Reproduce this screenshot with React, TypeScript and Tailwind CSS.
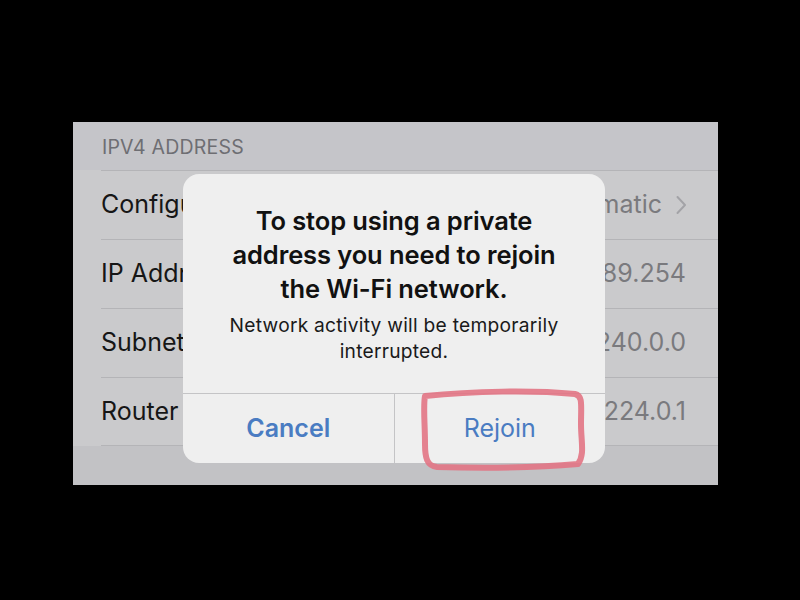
import React from 'react';

const ROWS = [
  { label: 'Configure IP', value: 'Automatic', chevron: true },
  { label: 'IP Address', value: '169.254.189.254' },
  { label: 'Subnet Mask', value: '255.240.0.0' },
  { label: 'Router', value: '192.168.224.0.1' },
];

export default function App() {
  return (
    <div className="w-[800px] h-[600px] bg-black pt-[122px] pl-[73px] font-['Inter',sans-serif]">
      <div className="relative w-[645px] h-[363px] bg-[#c2c2c5] overflow-hidden">
        <div className="h-[48px] flex items-center pl-[29px] pt-[4px] text-[19.5px] text-[#6e6e73] tracking-[0.2px] bg-[#c5c5c9]">
          IPV4 ADDRESS
        </div>
        <div className="bg-[#cacacc] pl-[28px]">
          {ROWS.map((r, i) => (
            <div
              key={r.label}
              className={`h-[69px] flex items-center justify-between pr-[32px] border-t border-[#b4b4b7] ${
                i === ROWS.length - 1 ? 'border-b border-b-[#b4b4b7]' : ''
              }`}
            >
              <span className="text-[25px] text-[#161616] whitespace-nowrap">{r.label}</span>
              <span className="flex items-center gap-[14px] text-[25px] text-[#7a7a7e] whitespace-nowrap">
                {r.value}
                {r.chevron && (
                  <svg width="11" height="20" viewBox="0 0 11 20" className="mr-[-1px]">
                    <path d="M1.5 2 L9 10 L1.5 18" fill="none" stroke="#a3a3a7" strokeWidth="2" strokeLinecap="round" strokeLinejoin="round" />
                  </svg>
                )}
              </span>
            </div>
          ))}
        </div>

        {/* alert sits over the list */}
        <div className="absolute left-[110px] top-[52px] w-[422px] h-[289px] bg-[#efefef] rounded-[16px] flex flex-col">
          <div className="flex-1 flex flex-col items-center pt-[30px] px-[10px] text-center">
            <div className="text-[25.5px] leading-[34px] font-semibold text-[#111] tracking-[-0.1px]">
              To stop using a private
              <br />
              address you need to rejoin
              <br />
              the Wi-Fi network.
            </div>
            <div className="mt-[6px] text-[19.2px] leading-[26px] text-[#1a1a1a] tracking-[0.25px]">
              Network activity will be temporarily
              <br />
              interrupted.
            </div>
          </div>
          <div className="h-[70px] flex border-t border-[#c4c4c6]">
            <div className="flex-1 flex items-center justify-center text-[25px] font-semibold text-[#4a7cc2] border-r border-[#c4c4c6]">
              Cancel
            </div>
            <div className="flex-1 flex items-center justify-center text-[25px] text-[#4a7cc2]">
              Rejoin
            </div>
          </div>
        </div>

        {/* hand-drawn annotation */}
        <svg
          className="absolute left-[340px] top-[262px]"
          width="180"
          height="90"
          viewBox="0 0 180 90"
        >
          <path
            d="M12 12 C60 7 120 6 162 10 C170 12 168 20 168 40 C168 58 172 70 165 80 C120 84 60 84 24 83 C14 82 12 74 12 60 C12 40 10 22 12 12 Z"
            fill="none"
            stroke="#e27484"
            strokeWidth="6"
            strokeLinejoin="round"
            opacity="0.9"
          />
        </svg>
      </div>
    </div>
  );
}
